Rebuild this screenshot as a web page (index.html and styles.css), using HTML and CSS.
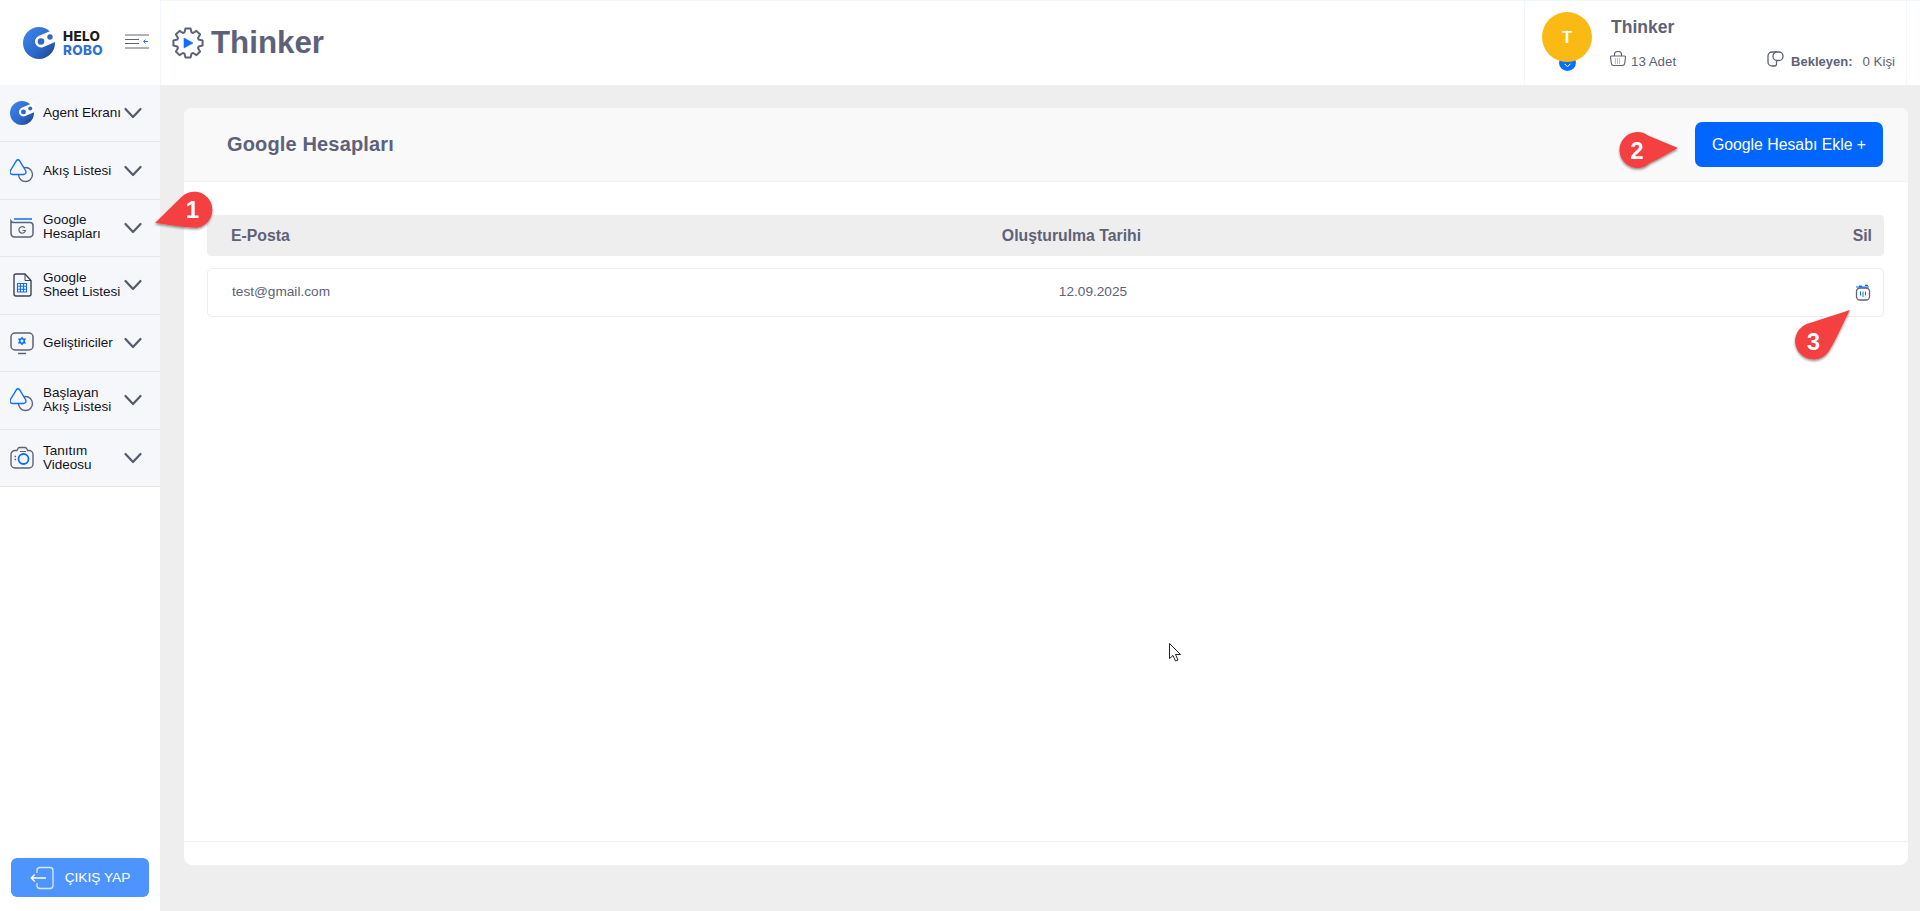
FILE: index.html
```html
<!DOCTYPE html>
<html lang="tr">
<head>
<meta charset="utf-8">
<title>Google Hesapları</title>
<link rel="stylesheet" href="styles.css">
</head>
<body>
<svg width="0" height="0" class="defs">
  <defs>
    <linearGradient id="lg" x1="0" y1="0" x2="1" y2="1">
      <stop offset="0" stop-color="#3f87ef"/>
      <stop offset="0.6" stop-color="#2c68c8"/>
      <stop offset="1" stop-color="#1d3f80"/>
    </linearGradient>
    <symbol id="logo" viewBox="0 0 32 32">
      <circle cx="16" cy="16" r="16" fill="url(#lg)"/>
      <path d="M18 14.500 36 6.800" stroke="#fff" stroke-width="12" stroke-linecap="round"/>
      <circle cx="18" cy="14.500" r="3.300" fill="#2f67c4"/>
      <circle cx="27" cy="10" r="2.700" fill="#2f67c4"/>
    </symbol>
    <symbol id="chev" viewBox="0 0 18 12">
      <path d="M1.500 2l7.500 8L16.500 2" fill="none" stroke="#565a6b" stroke-width="2.200" stroke-linecap="round" stroke-linejoin="round"/>
    </symbol>
    <symbol id="flow" viewBox="0 0 24 24">
      <circle cx="15.500" cy="15.500" r="7" fill="none" stroke="#5e6278" stroke-width="1.400"/>
      <path d="M6.300 1.800Q8-.2 9.700 1.800L15.500 11.500Q17 15 13.500 15.500H2.500Q-1 15 .5 11.500z" fill="#f6f7fb" stroke="#0d6efd" stroke-width="1.400" stroke-linejoin="round"/>
    </symbol>
  </defs>
</svg>

<div class="app">
  <div class="brand">
    <svg class="brand-logo"><use href="#logo"/></svg>
    <div class="brand-text"><span class="helo">HELO</span><span class="robo">ROBO</span></div>
    <svg class="burger" viewBox="0 0 24 15" fill="none">
      <path d="M0 1h24M0 5.500h14M0 9.500h14M0 14h24" stroke="#5e6278" stroke-width="1"/>
      <path d="M23 7.500h-4M20.500 5.500l-2 2 2 2" stroke="#1a73f0" stroke-width="1"/>
    </svg>
  </div>

  <header class="topbar">
    <div class="page-title">
      <svg class="gear" viewBox="0 0 32 32" fill="none">
        <path d="M12.540 5.350 13.430 1.420H18.570L19.460 5.350 21.080 6.020 24.490 3.880 28.120 7.510 25.980 10.920 26.650 12.540 30.580 13.430V18.570L26.650 19.460 25.980 21.080 28.120 24.490 24.490 28.120 21.080 25.980 19.460 26.650 18.570 30.580H13.430L12.540 26.650 10.920 25.980 7.510 28.120 3.880 24.490 6.020 21.080 5.350 19.460 1.420 18.570V13.430L5.350 12.540 6.020 10.920 3.880 7.510 7.510 3.880 10.920 6.020z" stroke="#5e6278" stroke-width="2" stroke-linejoin="round"/>
        <path d="M12 11v10l9-5z" fill="#0d6efd" stroke="#0d6efd" stroke-width=".6" stroke-linejoin="round"/>
      </svg>
      <h1>Thinker</h1>
    </div>
    <div class="user-box">
      <div class="avatar-wrap">
        <span class="avatar-badge">
          <svg viewBox="0 0 10 6" fill="none"><path d="M1.500 1l3.500 3.500L8.500 1" stroke="#fff" stroke-width="1.200"/></svg>
        </span>
        <span class="avatar">T</span>
      </div>
      <div class="user-info">
        <div class="user-name">Thinker</div>
        <div class="user-meta">
          <span class="meta-item">
            <svg class="meta-icon" viewBox="0 0 16 15" fill="none">
              <path d="M4.500 5V3.500a3.500 3 0 0 1 7 0V5" stroke="#5e6278" stroke-width="1.100"/>
              <path d="M1.500 5h13a1 1 0 0 1 1 1.200l-.8 6a2.500 2.500 0 0 1-2.500 2.300H3.800a2.500 2.500 0 0 1-2.500-2.300l-.8-6A1 1 0 0 1 1.500 5z" stroke="#5e6278" stroke-width="1.100"/>
              <path d="M5 8h6M5 10h6M5 12h6" stroke="#36a290" stroke-width="1" stroke-dasharray="1 1"/>
            </svg>
            13 Adet
          </span>
          <span class="meta-item meta-right">
            <svg class="meta-icon" viewBox="0 0 17 16" fill="none">
              <path d="M10 1H5a4 4 0 0 0-4 4v6a4 4 0 0 0 4 4h2.500a2 2 0 0 0 2-2v-3" stroke="#5e6278" stroke-width="1.300"/>
              <rect x="6" y="1" width="10" height="8.500" rx="4" stroke="#5e6278" stroke-width="1.300" fill="#fff"/>
            </svg>
            <b>Bekleyen:</b><span class="meta-val">0 Kişi</span>
          </span>
        </div>
      </div>
    </div>
  </header>

  <aside class="sidebar">
    <nav class="nav">
      <a class="nav-item"><svg class="nav-icon"><use href="#logo"/></svg><span class="nav-label">Agent Ekranı</span><svg class="chev"><use href="#chev"/></svg></a>
      <a class="nav-item"><svg class="nav-icon"><use href="#flow"/></svg><span class="nav-label">Akış Listesi</span><svg class="chev"><use href="#chev"/></svg></a>
      <a class="nav-item">
        <svg class="nav-icon" viewBox="0 0 24 24" fill="none">
          <path d="M1 5v12.500A3.500 3.500 0 0 0 4.500 21h15a3.500 3.500 0 0 0 3.500-3.500V9.500A3 3 0 0 0 20 6.500H4.500A3.500 3.500 0 0 1 1 5z" stroke="#5e6278" stroke-width="1.500"/>
          <path d="M4 3h18" stroke="#0d6efd" stroke-width="1.500"/>
          <path d="M14.800 11.800a3.300 3.300 0 1 0 .7 2.700h-3" stroke="#5e6278" stroke-width="1.200"/>
        </svg>
        <span class="nav-label nudge">Google<br>Hesapları</span><svg class="chev"><use href="#chev"/></svg>
      </a>
      <a class="nav-item">
        <svg class="nav-icon" viewBox="0 0 24 24" fill="none">
          <path d="M6 1h9l6 6.500V21a2 2 0 0 1-2 2H6a2 2 0 0 1-2-2V3a2 2 0 0 1 2-2z" stroke="#3f4254" stroke-width="1.400"/>
          <path d="M15 1v6.500h6" stroke="#3f4254" stroke-width="1"/>
          <path d="M7.500 10.500h9v8.500h-9zM7.500 13.300h9M7.500 16.200h9M10.500 10.500V19M13.500 10.500V19" stroke="#0d6efd" stroke-width="1.100"/>
        </svg>
        <span class="nav-label">Google<br>Sheet Listesi</span><svg class="chev"><use href="#chev"/></svg>
      </a>
      <a class="nav-item">
        <svg class="nav-icon" viewBox="0 0 24 24" fill="none">
          <rect x="1" y="2" width="22" height="17" rx="4" stroke="#5e6278" stroke-width="1.500"/>
          <path d="M8 22.500h8" stroke="#5e6278" stroke-width="1.500"/>
          <path d="M12 5.500l1.500 2h2.600l-1.300 2.500 1.300 2.500h-2.600l-1.500 2-1.500-2H7.900L9.200 10 7.900 7.500h2.600z" fill="#0d6efd"/>
          <circle cx="12" cy="10" r="1.400" fill="#f6f7fb"/>
        </svg>
        <span class="nav-label">Geliştiriciler</span><svg class="chev"><use href="#chev"/></svg>
      </a>
      <a class="nav-item"><svg class="nav-icon"><use href="#flow"/></svg><span class="nav-label">Başlayan<br>Akış Listesi</span><svg class="chev"><use href="#chev"/></svg></a>
      <a class="nav-item">
        <svg class="nav-icon" viewBox="0 0 24 24" fill="none">
          <path d="M7 4.500 8 2.500a2 2 0 0 1 1.800-1h5a2 2 0 0 1 1.800 1l1 2H19a4 4 0 0 1 4 4V18a4 4 0 0 1-4 4H5a4 4 0 0 1-4-4V8.500a4 4 0 0 1 4-4z" stroke="#5e6278" stroke-width="1.400"/>
          <circle cx="13.500" cy="13" r="5" stroke="#0d6efd" stroke-width="1.800"/>
          <path d="M4.500 10.500h1.500M4.500 13.500h1.500" stroke="#5e6278" stroke-width="1.400"/>
          <path d="M10 5.500h6" stroke="#5e6278" stroke-width="1"/>
        </svg>
        <span class="nav-label">Tanıtım<br>Videosu</span><svg class="chev"><use href="#chev"/></svg>
      </a>
    </nav>
    <button class="logout">
      <svg class="logout-icon" viewBox="0 0 24 24" fill="none">
        <path d="M7 7V4.500A3 3 0 0 1 10 1.500h10a3 3 0 0 1 3 3v15a3 3 0 0 1-3 3H10a3 3 0 0 1-3-3V17" stroke="#dbe8ff" stroke-width="1.300"/>
        <path d="M16 12H1.500M4.800 8.500 1.200 12l3.600 3.500" stroke="#fff" stroke-width="1.300"/>
      </svg>
      ÇIKIŞ YAP
    </button>
  </aside>

  <main class="content">
    <section class="card">
      <div class="card-head">
        <h2>Google Hesapları</h2>
        <button class="btn-add">Google Hesabı Ekle +</button>
      </div>
      <div class="card-body">
        <div class="row-grid table-head">
          <span>E-Posta</span>
          <span class="col-date">Oluşturulma Tarihi</span>
          <span class="col-del">Sil</span>
        </div>
        <div class="row-grid table-row">
          <span>test@gmail.com</span>
          <span class="col-date">12.09.2025</span>
          <span class="col-del">
            <svg class="trash" viewBox="0 0 16 16" fill="none">
              <rect x="1.500" y="3.500" width="13" height="12" rx="3.500" stroke="#5e6278" stroke-width="1.300"/>
              <path d="M1 2.500 14 2.500M4 1.500h3M10 .8h3" stroke="#0d6efd" stroke-width="1.200"/>
              <path d="M5.500 7v4M8 7v5.500M10.500 7v4" stroke="#0d6efd" stroke-width="1"/>
            </svg>
          </span>
        </div>
      </div>
      <div class="card-foot"></div>
    </section>
  </main>
</div>

<svg class="annotations" viewBox="0 0 1920 911">
  <defs>
    <filter id="pin-shadow" x="-20%" y="-20%" width="140%" height="150%">
      <feDropShadow dx="0" dy="1.500" stdDeviation="0.800" flood-color="#000" flood-opacity="0.450"/>
    </filter>
  </defs>
  <g class="pin" filter="url(#pin-shadow)">
    <path d="M155 223 181 197.500A18.100 18.100 0 1 1 197 227.700C183 228 168 224 155 223z"/>
    <text x="192.500" y="218">1</text>
  </g>
  <g class="pin" filter="url(#pin-shadow)">
    <path d="M1678 148 1648 135.400A18 18 0 1 0 1650 163C1659 159 1668 153 1678 148z"/>
    <text x="1637" y="159">2</text>
  </g>
  <g class="pin" filter="url(#pin-shadow)">
    <path d="M1850 310 1806 324.300A18.400 18.400 0 1 0 1829 351C1836 340 1843 323 1850 310z"/>
    <text x="1813.500" y="350">3</text>
  </g>
  <path class="cursor" d="M1169.500 643.500v15l3.500-3 2.500 5.500 2.500-1-2.500-5.500h5z"/>
</svg>
</body>
</html>
```

FILE: styles.css
```css
* { box-sizing: border-box; }
html, body { margin: 0; height: 100%; }
body {
  position: relative;
  width: 1920px;
  height: 911px;
  overflow: hidden;
  font-family: "Liberation Sans", Arial, sans-serif;
  color: #5e6278;
  background: #eeeeee;
}
.defs { position: absolute; }
.app {
  display: grid;
  grid-template-columns: 160px 1fr;
  grid-template-rows: 85px 1fr;
  height: 911px;
}
h1, h2 { margin: 0; }

/* Brand cell */
.brand {
  display: flex;
  align-items: center;
  background: #fff;
  padding-left: 23px;
}
.brand-logo { width: 32px; height: 32px; margin-top: 1px; }
.brand-text {
  display: flex;
  flex-direction: column;
  margin-left: 8px;
  font-family: Inter, sans-serif;
  font-weight: 800;
  font-size: 13.500px;
  line-height: 14px;
  letter-spacing: 0.300px;
}
.helo { color: #1c1c22; }
.robo { color: #2f6fd6; }
.burger { width: 24px; height: 15px; margin-left: 22px; margin-bottom: 3px; }

/* Top bar */
.topbar {
  display: flex;
  justify-content: space-between;
  background: #fff;
  border-left: 1px solid #f1f6ff;
  border-top: 1px solid #f1f6ff;
  padding-right: 13px;
}
.page-title { display: flex; align-items: center; gap: 7px; padding-left: 11px; }
.gear { width: 32px; height: 32px; }
.page-title h1 {
  font-size: 31.300px;
  line-height: 36px;
  font-weight: 700;
  color: #5e6278;
}
.user-box {
  display: flex;
  width: 383px;
  padding: 11px 0 0 17px;
  border-left: 1px solid #f1f6ff;
  border-right: 1px solid #f1f6ff;
}
.avatar-wrap { position: relative; width: 50px; height: 60px; }
.avatar {
  position: absolute;
  left: 0;
  top: 0;
  width: 50px;
  height: 50px;
  border-radius: 50%;
  background: #fbb913;
  color: #fff;
  font-weight: 700;
  font-size: 16.500px;
  display: flex;
  align-items: center;
  justify-content: center;
}
.avatar-badge {
  position: absolute;
  left: 17px;
  top: 42px;
  width: 17px;
  height: 17px;
  border-radius: 50%;
  background: #0d6efd;
  display: flex;
  align-items: flex-end;
  justify-content: center;
  padding-bottom: 3px;
}
.avatar-badge svg { width: 9px; height: 5px; }
.user-info { flex: 1; margin-left: 18px; padding-right: 11px; }
.user-name { font-size: 17.500px; font-weight: 700; line-height: 20px; margin-top: 5px; margin-left: 1px; }
.user-meta {
  display: flex;
  justify-content: space-between;
  margin-top: 17px;
  font-size: 13.300px;
  line-height: 16px;
}
.meta-item { display: flex; align-items: center; }
.meta-icon { width: 16px; height: 15px; margin-right: 5px; margin-top: -7px; }
.meta-right .meta-icon { width: 17px; height: 16px; margin-right: 7px; }
.meta-item b { font-size: 13px; }
.meta-val { margin-left: 10px; }

/* Sidebar */
.sidebar {
  display: flex;
  flex-direction: column;
  background: #fff;
}
.nav { display: flex; flex-direction: column; }
.nav-item {
  display: flex;
  align-items: center;
  height: 57.430px;
  padding: 0 18px 0 10px;
  background: #f6f7fb;
  border-bottom: 1px solid #ebe5e2;
  color: #13131d;
  font-size: 13.500px;
  line-height: 14px;
}
.nav-icon { width: 24px; height: 24px; flex: none; }
.nav-label { margin-left: 9px; flex: 1; white-space: nowrap; }
.nudge { margin-top: -2px; }
.chev { width: 18px; height: 12px; flex: none; margin-left: -6px; }
.logout {
  display: flex;
  align-items: center;
  justify-content: center;
  gap: 11px;
  margin: auto 11px 14px;
  height: 39px;
  border: 0;
  border-radius: 6px;
  background: #4d94ff;
  color: #fff;
  font: 13.700px "Liberation Sans", Arial, sans-serif;
}
.logout-icon { width: 24px; height: 24px; }

/* Content */
.content { padding: 23px 12px 46px 24px; }
.card {
  display: flex;
  flex-direction: column;
  height: 100%;
  background: #fff;
  border-radius: 8px;
  overflow: hidden;
}
.card-head {
  display: flex;
  align-items: center;
  justify-content: space-between;
  height: 74px;
  padding: 0 25px 0 43px;
  background: #f9f9f9;
  border-bottom: 1px solid #f1f1f4;
}
.card-head h2 { font-size: 20px; font-weight: 700; color: #5e6278; letter-spacing: 0.150px; }
.btn-add {
  width: 188px;
  height: 45px;
  border: 0;
  border-radius: 7px;
  background: #0066ff;
  color: #fff;
  font: 15.800px "Liberation Sans", Arial, sans-serif;
}
.card-body { flex: 1; padding: 33px 24px 0 23px; }
.row-grid {
  display: grid;
  grid-template-columns: 1fr 1fr 1fr;
  align-items: center;
}
.table-head {
  height: 41px;
  padding: 0 12px 0 24px;
  background: #eeeeee;
  border-radius: 4px;
  font-size: 15.800px;
  font-weight: 700;
}
.table-row {
  height: 49px;
  margin-top: 12px;
  padding: 0 12px 2px 24px;
  border: 1px solid #e4eefc;
  border-radius: 5px;
  font-size: 13.650px;
  color: #5e6278;
}
.col-date { text-align: center; }
.table-head .col-date { padding-left: 40px; }
.table-row .col-date { padding-left: 83px; }
.col-del { text-align: right; }
.trash { width: 16px; height: 17px; vertical-align: middle; position: relative; top: 1px; }
.card-foot { height: 24px; border-top: 1px solid #eff0f3; }

/* Annotations above the page */
.annotations {
  position: absolute;
  left: 0;
  top: 0;
  width: 1920px;
  height: 911px;
  pointer-events: none;
}
.pin path { fill: #f43f3f; }
.pin text {
  fill: #fff;
  font: 700 24px "Liberation Sans", Arial, sans-serif;
  text-anchor: middle;
}
.cursor { fill: #fff; stroke: #222; stroke-width: 1; }
```
